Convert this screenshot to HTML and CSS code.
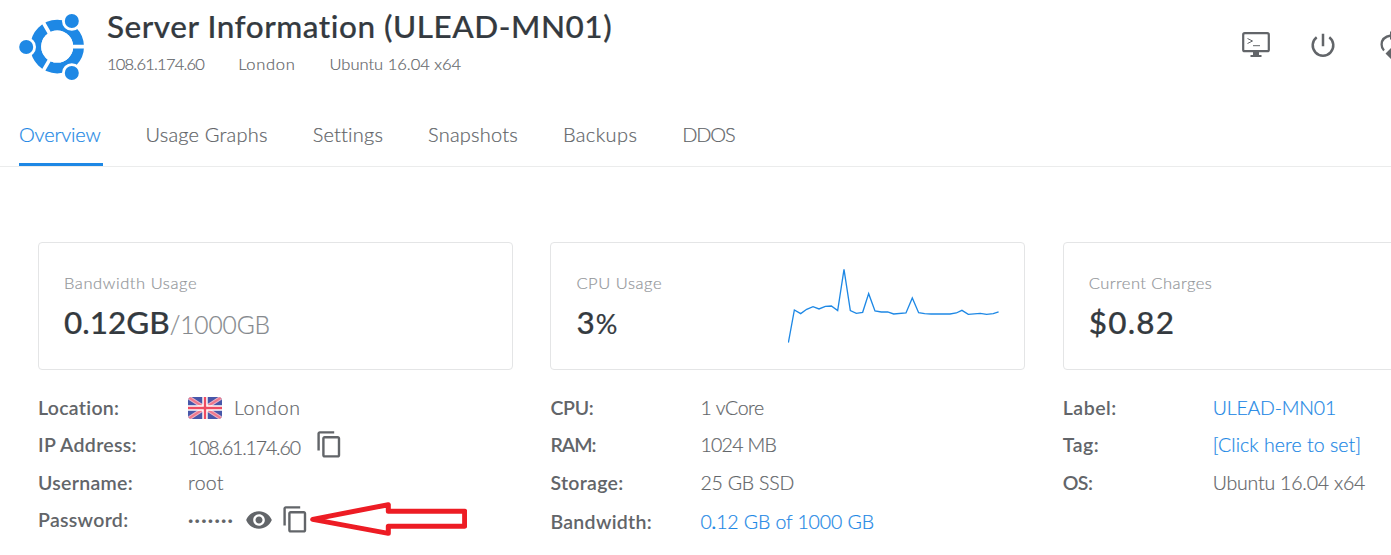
FILE: index.html
```html
<!DOCTYPE html>
<html lang="en">
<head>
<meta charset="utf-8">
<title>Server Information</title>
<link rel="stylesheet" href="styles.css">
</head>
<body>
<header class="header">
  <svg class="logo" viewBox="0 0 66 68">
    <circle cx="38.2" cy="33.6" r="21.4" fill="none" stroke="#1e88e5" stroke-width="10.8"/>
    <path d="M38 33.6H66M38.2 33.6 24 9M38.2 33.6 24 58.2" stroke="#fff" stroke-width="3.6"/>
    <circle cx="38.2" cy="33.6" r="16" fill="#fff"/>
    <g fill="#1e88e5" stroke="#fff" stroke-width="2.8">
      <circle cx="7.2" cy="34" r="8.4"/><circle cx="52.8" cy="8" r="8.4"/><circle cx="52.8" cy="60" r="8.4"/>
    </g>
  </svg>
  <div class="heading">
    <h1 class="title">Server Information (ULEAD-MN01)</h1>
    <div class="meta"><span class="meta-ip">108.61.174.60</span><span class="meta-city">London</span><span>Ubuntu 16.04 x64</span></div>
  </div>
  <div class="actions">
    <svg class="act-console" viewBox="0 0 28 26"><rect x="1.2" y="1.2" width="25.6" height="18" rx="1.5" fill="none" stroke="#626569" stroke-width="2.2"/><path d="M11 19h6v4h2.500v2h-11v-2H11z" fill="#626569"/><path d="M5.500 6.500 10.500 9l-5 2.500M11 13.700h7" fill="none" stroke="#626569" stroke-width="1"/></svg>
    <svg class="act-power" viewBox="0 0 24 24"><path d="M12 .8v12.400M5.700 4.200a10.300 10.300 0 1 0 12.600 0" fill="none" stroke="#626569" stroke-width="2.500"/></svg>
    <svg class="act-restart" viewBox="0 0 11 28"><path d="M11 4.500C5 5.500 1.600 9 1.600 13.500c0 2.300.8 4.400 2.400 6" fill="none" stroke="#626569" stroke-width="2.300"/><path d="M5.500 22.500 11 17v11zM11 0v9l-1-1V1z" fill="#626569"/></svg>
  </div>
</header>
<nav class="tabs">
  <a class="tab active">Overview</a><a class="tab">Usage Graphs</a><a class="tab">Settings</a><a class="tab">Snapshots</a><a class="tab">Backups</a><a class="tab">DDOS</a>
</nav>
<main class="grid">
  <section class="column network">
    <div class="card"><div><div class="caption">Bandwidth Usage</div><div class="figure">0.12GB<span class="limit">/1000GB</span></div></div></div>
    <dl class="details">
      <div class="row"><dt>Location:</dt><dd><svg class="flag" viewBox="0 0 34 22"><path fill="#4757a9" d="M0 0h34v22H0z"/><path d="M0 0 34 22M34 0 0 22" stroke="#e9b3c6" stroke-width="4"/><path d="M0 0 34 22M34 0 0 22" stroke="#f0788b" stroke-width="2"/><path d="M17 0v22M0 11h34" stroke="#fff" stroke-width="5.400"/><path d="M17 0v22M0 11h34" stroke="#ee4c62" stroke-width="2.400"/></svg>London</dd></div>
      <div class="row"><dt>IP Address:</dt><dd><span class="address">108.61.174.60</span><svg class="copy" viewBox="0 0 24 24"><path fill="#626569" d="M16 1H4c-1.100 0-2 .9-2 2v14h2V3h12V1zm3 4H8c-1.100 0-2 .9-2 2v14c0 1.100.9 2 2 2h11c1.100 0 2-.9 2-2V7c0-1.100-.9-2-2-2zm0 16H8V7h11v14z"/></svg></dd></div>
      <div class="row"><dt>Username:</dt><dd>root</dd></div>
      <div class="row"><dt>Password:</dt><dd><span class="dots">·······</span><svg class="eye" viewBox="0 0 24 24"><path fill="#626569" d="M12 4.500C7 4.500 2.730 7.610 1 12c1.730 4.390 6 7.500 11 7.500s9.270-3.110 11-7.500c-1.730-4.390-6-7.500-11-7.500zM12 17c-2.760 0-5-2.240-5-5s2.240-5 5-5 5 2.240 5 5-2.240 5-5 5zm0-8c-1.660 0-3 1.340-3 3s1.340 3 3 3 3-1.340 3-3-1.340-3-3-3z"/></svg><svg class="copy" viewBox="0 0 24 24"><path fill="#626569" d="M16 1H4c-1.100 0-2 .9-2 2v14h2V3h12V1zm3 4H8c-1.100 0-2 .9-2 2v14c0 1.100.9 2 2 2h11c1.100 0 2-.9 2-2V7c0-1.100-.9-2-2-2zm0 16H8V7h11v14z"/></svg>
        <svg class="callout" viewBox="240 36 472 104"><path d="M248 88 475 44V64H704V109H475V130Z" fill="#fff" stroke="#ed1c24" stroke-width="15" stroke-linejoin="round"/></svg></dd></div>
    </dl>
  </section>
  <section class="column compute">
    <div class="card"><div><div class="caption">CPU Usage</div><div class="figure">3<span class="percent">%</span></div></div>
      <svg class="chart" viewBox="54 50 640 235"><polyline fill="none" stroke="#1e88e5" stroke-width="4" points="55,277 73,179 92,190 110,177 129,169 147,176 166,168 184,167 203,181 222,57 241,181 259,189 278,186 296,130 315,182 334,185 353,185 371,191 408,188 427,143 446,187 464,190 483,191 540,191 559,188 576,180 595,192 631,189 650,192 670,190 686,185"/></svg></div>
    <dl class="details">
      <div class="row"><dt>CPU:</dt><dd>1 vCore</dd></div>
      <div class="row"><dt>RAM:</dt><dd>1024 MB</dd></div>
      <div class="row"><dt>Storage:</dt><dd>25 GB SSD</dd></div>
      <div class="row last"><dt>Bandwidth:</dt><dd class="link">0<b>.</b><span>12 GB of 1000 GB</span></dd></div>
    </dl>
  </section>
  <section class="column billing">
    <div class="card"><div><div class="caption">Current Charges</div><div class="figure">$0.82</div></div></div>
    <dl class="details">
      <div class="row"><dt>Label:</dt><dd class="link">ULEAD-MN01</dd></div>
      <div class="row"><dt>Tag:</dt><dd class="link">[Click here to set]</dd></div>
      <div class="row"><dt>OS:</dt><dd>Ubuntu 16.04 x64</dd></div>
    </dl>
  </section>
</main>
</body>
</html>
```
FILE: styles.css
```css
* { box-sizing: border-box; }
html, body { margin: 0; height: 555px; overflow: hidden; }
body { background: #fff; color: #626569; font-family: Lato, "Open Sans", sans-serif; font-weight: 300; white-space: nowrap; font-variant-ligatures: none; -webkit-text-stroke: 0.2px; }
svg { display: block; flex: none; }

.header { display: flex; height: 104px; padding: 13px 0 0 19px; }
.logo { width: 66px; height: 68px; }
.heading { margin-left: 22px; flex: 1; }
.title { margin: 0; font-size: 31.5px; line-height: 27px; font-weight: 500; color: #343a40; letter-spacing: 0.53px; }
.meta { display: flex; gap: 34px; font-size: 16.5px; line-height: 24px; margin-top: 12px; }
.meta-ip { letter-spacing: -0.78px; }
.meta-city { letter-spacing: 0.7px; }
.actions { display: flex; margin-top: 18px; }
.act-console { width: 28px; height: 26px; margin: 1px 41px 0 0; }
.act-power { width: 24px; height: 24px; margin: 2px 45px 0 0; }
.act-restart { width: 11px; height: 28px; }

.tabs { display: flex; gap: 45px; height: 63px; padding-left: 19px; border-bottom: 1px solid #ebecec; font-size: 20px; }
.tab { height: 62px; line-height: 60px; letter-spacing: 0.2px; }
.tab.active { width: 84px; margin-right: -2.5px; letter-spacing: -0.2px; color: #1e88e5; border-bottom: 3px solid #1e88e5; }
.tab:nth-child(5) { letter-spacing: 0.4px; }
.tab:nth-child(6) { letter-spacing: -1.2px; }

.grid { display: grid; grid-template-columns: repeat(3, 475px); gap: 37.4px; padding: 75px 0 0 38px; }
.card { display: flex; justify-content: space-between; height: 128px; border: 1px solid #e4e5e6; border-radius: 4px; padding: 23px 23px 0 25px; }
.caption { font-size: 16.5px; line-height: 34px; color: #94979b; letter-spacing: 0.57px; }
.figure { font-size: 31.5px; line-height: 44px; font-weight: 500; color: #343a40; }
.limit { font-size: 24.5px; font-weight: 300; color: #85898d; letter-spacing: -0.1px; }
.percent { font-size: 27px; font-weight: 400; margin-left: 1px; }
.chart { width: 213.3px; height: 78.3px; margin-top: 1px; }
.billing .caption { letter-spacing: 0.45px; }
.billing .figure { letter-spacing: 1.2px; }

.details { margin: 18.6px 0 0; font-size: 19.5px; }
.row { display: flex; align-items: center; height: 37.5px; }
.last { padding-top: 4px; }
dt { width: 150px; font-weight: 600; letter-spacing: 0.3px; -webkit-text-stroke: 0; }
dd { position: relative; display: flex; align-items: center; margin: 0; letter-spacing: -0.2px; }
.link { color: #1e88e5; }
.network dd { letter-spacing: 0.3px; }
.network .row:first-child dd { letter-spacing: 0.6px; }
.compute .row:nth-child(1) dt { letter-spacing: -0.3px; }
.compute .row:nth-child(2) dt { letter-spacing: -1px; }
.compute .row:nth-child(1) dd { letter-spacing: -0.4px; }
.compute .row:nth-child(2) dd { letter-spacing: -0.7px; }
.compute .last dd { letter-spacing: -0.1px; }
.billing dt { letter-spacing: 0.5px; }
.billing .row:nth-child(2) dd { letter-spacing: 0.05px; }
.billing .row:nth-child(3) dt { letter-spacing: -0.6px; }
.flag { width: 34px; height: 22px; border-radius: 4px; margin: 2px 12px 0 0; }
.address { letter-spacing: -1.15px; padding-top: 5px; }
.copy { width: 28.8px; height: 28.8px; }
.address + .copy { margin-left: 15px; }
.dots { letter-spacing: 1.25px; font-weight: 700; -webkit-text-stroke: 0; }
.eye { width: 28px; height: 28px; margin: 1px 8px 0 11px; }
.callout { position: absolute; left: 122px; top: -3px; width: 157.3px; height: 34.7px; }
```
